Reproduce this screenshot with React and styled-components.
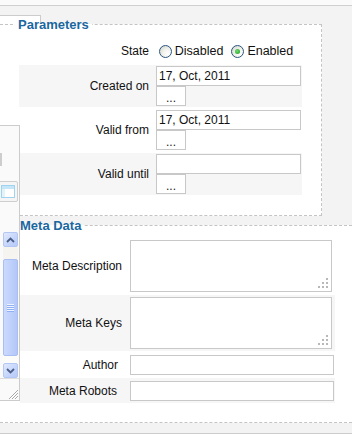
import React from "react";
import styled, { createGlobalStyle } from "styled-components";

const Global = createGlobalStyle`
  html, body { margin: 0; padding: 0; }
  body {
    background: #f3f3f3;
    font-family: "Liberation Sans", Arial, sans-serif;
    font-size: 12px;
    color: #111;
  }
`;

const Page = styled.div`
  position: relative;
  width: 352px;
  height: 434px;
  overflow: hidden;
  background: #f3f3f3;
`;

const TopStrip = styled.div`
  height: 5px;
  background: #fafafa;
  border-bottom: 1px solid #cfcfcf;
`;

const Tab = styled.div`
  position: absolute;
  left: 0;
  top: 15px;
  width: 40px;
  height: 9px;
  background: #fff;
  border-top: 1px solid #cccccc;
  border-right: 1px solid #cccccc;
`;

const Fieldset = styled.fieldset`
  position: relative;
  margin: ${(p) => p.$mt}px ${(p) => p.$mr}px 0 -10px;
  padding: ${(p) => p.$pt}px 0 ${(p) => p.$pb}px ${(p) => p.$pl}px;
  border: 1px dashed #c4c4c4;
  background: #fff;
  min-width: 0;
`;

const Legend = styled.legend`
  margin-left: ${(p) => p.$ml}px;
  padding: 0 3px;
  font-size: 13px;
  line-height: 15px;
  font-weight: bold;
  color: #1a679f;
`;

const Table = styled.div`
  display: flex;
  flex-direction: column;
  gap: ${(p) => p.$gap}px;
  width: ${(p) => p.$w}px;
`;

const Row = styled.div`
  display: grid;
  grid-template-columns: ${(p) => p.$key}px 1fr;
  height: ${(p) => p.$h}px;
  background: ${(p) => (p.$alt ? "#f6f6f6" : "transparent")};
`;

const Key = styled.div`
  display: flex;
  align-items: center;
  justify-content: flex-end;
  padding-right: ${(p) => p.$pr}px;
  white-space: nowrap;
`;

const Value = styled.div`
  display: flex;
  flex-direction: ${(p) => (p.$row ? "row" : "column")};
  justify-content: center;
  align-items: ${(p) => (p.$row ? "center" : "flex-start")};
  padding-left: ${(p) => p.$pl}px;
`;

const TextInput = styled.input`
  box-sizing: border-box;
  width: ${(p) => p.$w}px;
  height: 20px;
  margin: 0;
  padding: 0 2px;
  border: 1px solid #c8c8c8;
  background: #fff;
  font: 12px "Liberation Sans", Arial, sans-serif;
  color: #111;
  outline: none;
`;

const DotsButton = styled.button`
  box-sizing: border-box;
  width: 30px;
  height: 20px;
  margin: 0;
  padding: 3px 0 0;
  border: 1px solid #c8c8c8;
  background: #fff;
  font: 12px "Liberation Sans", Arial, sans-serif;
  color: #222;
  line-height: 14px;
`;

const RadioOption = styled.label`
  display: inline-flex;
  align-items: center;
  gap: 3px;
  margin-left: 1px;
  margin-right: 7px;
  font-size: 12.5px;
`;

const RadioDot = styled.span`
  box-sizing: border-box;
  width: 13px;
  height: 13px;
  border-radius: 50%;
  border: 1px solid #2a5680;
  background: radial-gradient(circle at 70% 70%, #ffffff 0%, #f1f1ec 45%, #cfcfc8 100%);
  display: inline-flex;
  align-items: center;
  justify-content: center;
  &::after {
    content: "";
    width: 5px;
    height: 5px;
    border-radius: 50%;
    background: ${(p) => (p.$on ? "radial-gradient(circle at 40% 40%, #6fdc6f, #1b9b1b)" : "transparent")};
  }
`;

const AreaWrap = styled.div`
  position: relative;
  width: 202px;
  height: 52px;
`;

const Area = styled.textarea`
  box-sizing: border-box;
  display: block;
  width: 202px;
  height: 52px;
  margin: 0;
  border: 1px solid #c8c8c8;
  background: #fff;
  resize: none;
  outline: none;
`;

const AreaGrip = styled.svg`
  position: absolute;
  right: 4px;
  bottom: 4px;
  width: 10px;
  height: 10px;
`;

const Footer = styled.div`
  height: 10px;
  border-bottom: 1px solid #cccccc;
`;

/* overlapping left editor fragment */
const SidePanel = styled.div`
  position: absolute;
  left: 0;
  top: 125px;
  width: 19px;
  height: 274px;
  background: #fafafa;
  border-top: 1px solid #cccccc;
  border-right: 1px solid #cccccc;
  border-bottom: 1px solid #cccccc;
`;

const InputEdge = styled.div`
  position: absolute;
  left: 0;
  top: 27px;
  width: 2px;
  height: 13px;
  background: #cdcdcd;
`;

const CalButton = styled.div`
  position: absolute;
  left: -2px;
  top: 55px;
  width: 18px;
  height: 19px;
  border: 1px solid #cfcfcf;
  border-radius: 2px;
  background: #f5f5f5;
  display: flex;
  align-items: center;
  justify-content: center;
`;

const ScrollBar = styled.div`
  position: absolute;
  left: 3px;
  top: 106px;
  width: 15px;
  height: 146px;
  background: linear-gradient(to bottom, #f4f3ee, #fdfdfb);
  display: flex;
  flex-direction: column;
  align-items: stretch;
`;

const ScrollBtn = styled.div`
  box-sizing: border-box;
  height: 15px;
  margin-top: ${(p) => (p.$end ? "auto" : "0")};
  border: 1px solid #b3c6f4;
  border-radius: 2px;
  background: linear-gradient(135deg, #e1e9fd 0%, #c4d4fb 60%, #b6c9f7 100%);
  display: flex;
  align-items: center;
  justify-content: center;
`;

const ScrollThumb = styled.div`
  box-sizing: border-box;
  margin-top: 12px;
  height: 97px;
  border: 1px solid #a9bef1;
  border-radius: 2px;
  background: linear-gradient(to right, #cbdafd 0%, #bfd1fb 50%, #b3c7f7 100%);
  display: flex;
  align-items: center;
  justify-content: center;
`;

const PanelRule = styled.div`
  position: absolute;
  left: 0;
  top: 252px;
  width: 19px;
  height: 1px;
  background: #dddddd;
`;

const SizeGrip = styled.svg`
  position: absolute;
  right: 1px;
  bottom: 1px;
  width: 10px;
  height: 10px;
`;

function DateField({ value }) {
  return (
    <>
      <TextInput $w={145} defaultValue={value} readOnly />
      <DotsButton type="button">...</DotsButton>
    </>
  );
}

function TextArea() {
  return (
    <AreaWrap>
      <Area />
      <AreaGrip viewBox="0 0 10 10">
        <g fill="#b8b8b8">
          <rect x="8" y="0" width="2" height="2" />
          <rect x="4" y="4" width="2" height="2" />
          <rect x="8" y="4" width="2" height="2" />
          <rect x="0" y="8" width="2" height="2" />
          <rect x="4" y="8" width="2" height="2" />
          <rect x="8" y="8" width="2" height="2" />
        </g>
      </AreaGrip>
    </AreaWrap>
  );
}

export default function App() {
  return (
    <>
      <Global />
      <Page>
        <TopStrip />
        <Tab />
        <Fieldset $mt={11} $mr={30} $pt={7} $pb={20} $pl={28}>
          <Legend $ml={-4}>Parameters</Legend>
          <Table $gap={2} $w={283}>
            <Row $key={135} $h={24}>
              <Key $pr={5}>State</Key>
              <Value $row $pl={2}>
                <RadioOption>
                  <RadioDot />
                  Disabled
                </RadioOption>
                <RadioOption>
                  <RadioDot $on />
                  Enabled
                </RadioOption>
              </Value>
            </Row>
            <Row $key={135} $h={42} $alt>
              <Key $pr={5}>Created on</Key>
              <Value $pl={2}>
                <DateField value="17, Oct, 2011" />
              </Value>
            </Row>
            <Row $key={135} $h={42}>
              <Key $pr={5}>Valid from</Key>
              <Value $pl={2}>
                <DateField value="17, Oct, 2011" />
              </Value>
            </Row>
            <Row $key={135} $h={42} $alt>
              <Key $pr={5}>Valid until</Key>
              <Value $pl={2}>
                <DateField value="" />
              </Value>
            </Row>
          </Table>
        </Fieldset>
        <Fieldset $mt={2} $mr={-10} $pt={5} $pb={19} $pl={29}>
          <Legend $ml={-3}>Meta Data</Legend>
          <Table $gap={1} $w={315}>
            <Row $key={107} $h={56}>
              <Key $pr={5}>Meta Description</Key>
              <Value $pl={3}>
                <TextArea />
              </Value>
            </Row>
            <Row $key={107} $h={56} $alt>
              <Key $pr={5}>Meta Keys</Key>
              <Value $pl={3}>
                <TextArea />
              </Value>
            </Row>
            <Row $key={107} $h={25}>
              <Key $pr={9}>Author</Key>
              <Value $pl={3}>
                <TextInput $w={204} />
              </Value>
            </Row>
            <Row $key={107} $h={25} $alt>
              <Key $pr={10}>Meta Robots</Key>
              <Value $pl={3}>
                <TextInput $w={204} />
              </Value>
            </Row>
          </Table>
        </Fieldset>
        <Footer />
        <SidePanel>
          <InputEdge />
          <CalButton>
            <svg width="14" height="13" viewBox="0 0 14 13">
              <rect x="0.5" y="0.5" width="13" height="12" fill="#ffffff" stroke="#9fd3f0" />
              <rect x="1" y="1" width="12" height="3" fill="#c4e6f8" />
              <rect x="1" y="4" width="3" height="8" fill="#e3f3fc" />
            </svg>
          </CalButton>
          <ScrollBar>
            <ScrollBtn>
              <svg width="9" height="6" viewBox="0 0 9 6">
                <path d="M1 5 L4.5 1.5 L8 5" fill="none" stroke="#4c5f87" strokeWidth="1.8" />
              </svg>
            </ScrollBtn>
            <ScrollThumb>
              <svg width="7" height="8" viewBox="0 0 7 8">
                <g stroke="#eef3fe" strokeWidth="1">
                  <path d="M0 0.5 H7 M0 2.5 H7 M0 4.5 H7 M0 6.5 H7" />
                </g>
                <g stroke="#8fb0f3" strokeWidth="1">
                  <path d="M0 1.5 H7 M0 3.5 H7 M0 5.5 H7 M0 7.5 H7" />
                </g>
              </svg>
            </ScrollThumb>
            <ScrollBtn $end>
              <svg width="9" height="6" viewBox="0 0 9 6">
                <path d="M1 1 L4.5 4.5 L8 1" fill="none" stroke="#4c5f87" strokeWidth="1.8" />
              </svg>
            </ScrollBtn>
          </ScrollBar>
          <PanelRule />
          <SizeGrip viewBox="0 0 10 10">
            <g stroke="#a8a8a8" strokeWidth="1">
              <path d="M10 1 L1 10 M10 4 L4 10 M10 7 L7 10" />
            </g>
            <g stroke="#ffffff" strokeWidth="1">
              <path d="M10 2 L2 10 M10 5 L5 10 M10 8 L8 10" />
            </g>
          </SizeGrip>
        </SidePanel>
      </Page>
    </>
  );
}
